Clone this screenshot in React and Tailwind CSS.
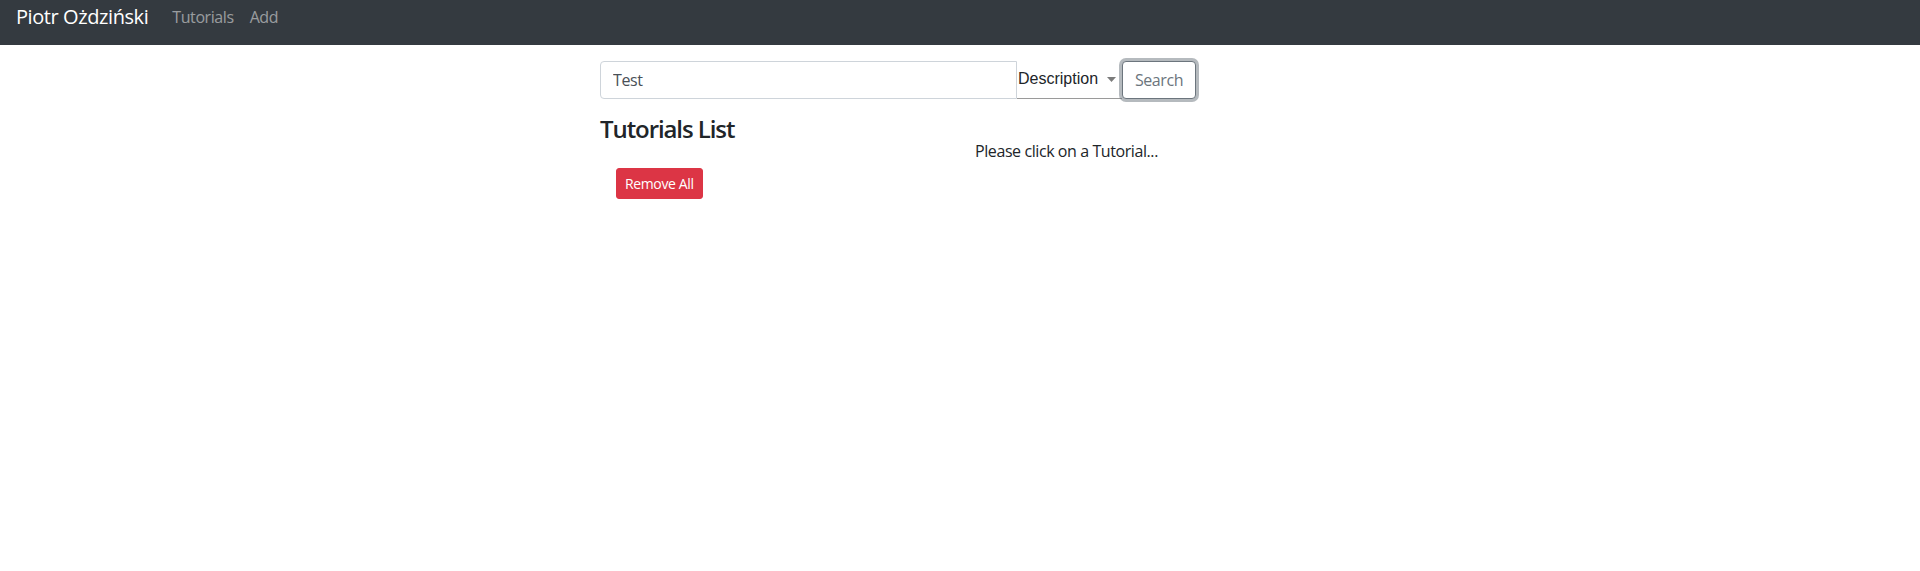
import React, { useState } from 'react';

const font = "font-['Open_Sans',sans-serif] tracking-[-0.026em]";

export default function App() {
  const [title, setTitle] = useState('Test');

  return (
    <div className={`min-h-[571px] bg-white text-[#212529] ${font}`}>
      {/* Navbar */}
      <nav className="h-[45px] bg-[#343a40] px-4">
        <div className="h-[34px] flex items-center">
          <span className="text-[20px] text-white mr-4 leading-[30px]">Piotr Ożdziński</span>
          <div className="flex items-center">
            <span className="px-2 text-[16px] text-white/50">Tutorials</span>
            <span className="px-2 text-[16px] text-white/50">Add</span>
          </div>
        </div>
      </nav>

      {/* Content */}
      <div className="mt-4 w-[750px] mx-auto flex flex-wrap">
        <div className="w-[500px] px-[15px]">
          <div className="flex items-stretch mb-4 h-[38px]">
            <input
              value={title}
              onChange={(e) => setTitle(e.target.value)}
              className="w-[417px] shrink-0 h-[38px] px-3 text-[16px] text-[#495057] border border-[#ced4da] rounded-l outline-none tracking-[-0.026em]"
            />
            <div className="w-[105px] shrink-0 flex items-center border-b border-[#9a9a9a] h-[38px] font-['Liberation_Sans',sans-serif] tracking-normal text-[16px] text-[#212529]">
              <span className="pl-[1px] -mt-[2px]">Description</span>
              <svg width="9" height="5" viewBox="0 0 9 5" className="ml-[9px]">
                <path d="M0 0h9L4.5 5z" fill="#7b7b7b" />
              </svg>
            </div>
            <button className="w-[74px] shrink-0 h-[38px] border border-[#6c757d] rounded text-[16px] text-[#6c757d] bg-white shadow-[0_0_0_3px_rgba(108,117,125,0.5)] tracking-[-0.026em]">
              Search
            </button>
          </div>
        </div>
        <div className="w-[250px]" />

        <div className="w-[375px] px-[15px]">
          <h4 className="text-[24px] font-semibold leading-[1.2] mb-2 tracking-[-0.045em]">Tutorials List</h4>
          <button className="m-4 px-2 py-1 text-[14px] leading-[1.5] text-white bg-[#dc3545] border border-[#dc3545] rounded-[3px] tracking-[-0.026em]">
            Remove All
          </button>
        </div>
        <div className="w-[375px] px-[15px] text-[16px] leading-[1.5]">
          <div className="h-6" />
          <p>Please click on a Tutorial...</p>
        </div>
      </div>
    </div>
  );
}
